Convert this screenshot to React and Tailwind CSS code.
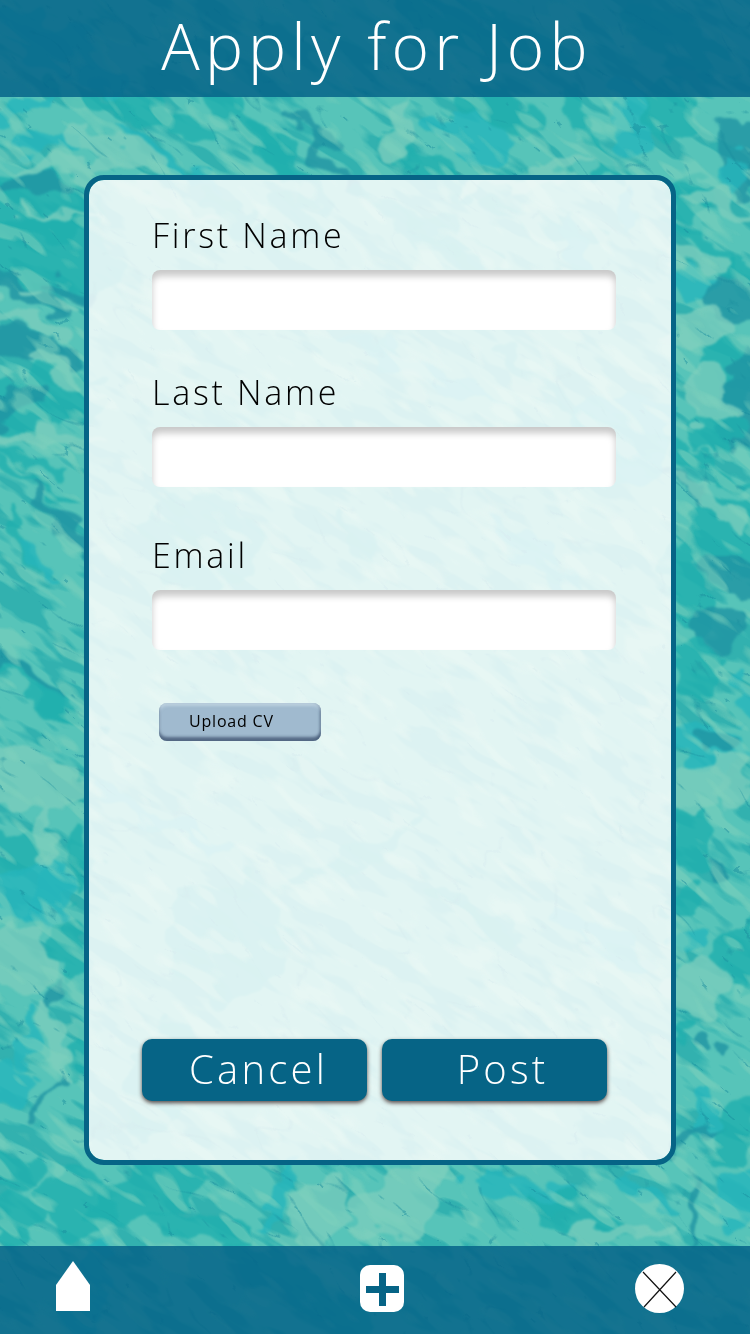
import React from "react";

const DEEP = "#1f93a3";
const TEAL = "#1fafae";
const AQUA = "#25b5bb";
const PALE = "#7acdbd";

// Ripples on the water: [cx, cy, rx, ry, angle, colour]
const ripples = [
  [20, 115, 30, 10, -30, AQUA], [45, 140, 40, 9, -5, AQUA], [90, 105, 60, 9, 20, TEAL],
  [45, 205, 60, 36, 10, TEAL], [35, 185, 30, 12, 0, DEEP], [50, 255, 70, 40, 12, TEAL],
  [20, 290, 60, 10, 25, DEEP], [70, 290, 24, 8, 20, DEEP], [30, 348, 50, 18, 15, DEEP],
  [35, 400, 70, 28, -10, TEAL], [10, 405, 40, 14, -30, DEEP], [15, 455, 60, 6, 15, TEAL],
  [30, 480, 60, 5, 30, TEAL], [60, 520, 50, 6, 45, DEEP], [20, 540, 30, 5, 60, TEAL],
  [40, 560, 34, 5, 45, AQUA], [40, 690, 75, 12, 38, TEAL], [20, 670, 50, 8, 35, DEEP],
  [65, 710, 40, 8, 35, TEAL], [15, 850, 40, 22, -20, TEAL], [25, 890, 45, 28, -25, AQUA],
  [52, 900, 20, 30, 10, AQUA], [68, 950, 16, 30, -10, TEAL], [80, 860, 12, 36, 0, TEAL],
  [57, 990, 5, 16, 5, DEEP], [30, 1040, 8, 34, 0, AQUA], [10, 1085, 18, 26, 0, AQUA],
  [76, 1060, 12, 26, 20, TEAL], [42, 1105, 30, 4, -55, DEEP], [15, 1170, 30, 20, 10, TEAL],
  [10, 1215, 26, 22, 0, TEAL], [75, 1205, 40, 34, 10, TEAL],
  [150, 110, 70, 12, 25, TEAL], [170, 160, 60, 6, 30, AQUA], [250, 130, 70, 14, 48, TEAL],
  [290, 170, 60, 16, 50, TEAL], [230, 215, 40, 12, 40, TEAL], [290, 225, 34, 22, 30, TEAL],
  [330, 155, 60, 6, 50, DEEP], [430, 170, 60, 14, 40, TEAL], [470, 140, 50, 24, 20, AQUA],
  [500, 110, 50, 20, 20, TEAL], [540, 220, 60, 12, 15, TEAL], [450, 235, 60, 8, 25, TEAL],
  [590, 140, 54, 10, 65, TEAL], [630, 120, 20, 44, -10, AQUA], [625, 210, 8, 26, -10, AQUA],
  [670, 110, 26, 34, 0, TEAL], [740, 155, 18, 44, 0, DEEP], [730, 175, 10, 26, 0, AQUA],
  [690, 195, 20, 24, 20, TEAL], [700, 240, 50, 8, 35, TEAL], [690, 285, 22, 14, 20, AQUA],
  [735, 300, 34, 24, 20, DEEP], [740, 270, 24, 16, 0, TEAL], [730, 370, 34, 34, 30, TEAL],
  [745, 400, 20, 54, 10, DEEP], [715, 430, 26, 22, 0, TEAL], [700, 460, 60, 8, 35, TEAL],
  [690, 485, 50, 7, 45, DEEP], [725, 535, 44, 36, 25, TEAL], [735, 575, 34, 20, 30, DEEP],
  [690, 590, 18, 54, -20, TEAL], [720, 630, 30, 20, 0, DEEP], [695, 670, 22, 34, 10, TEAL],
  [710, 745, 34, 24, 10, AQUA], [720, 740, 18, 12, 0, DEEP], [745, 700, 8, 28, -20, AQUA],
  [690, 840, 26, 34, 0, TEAL], [685, 900, 20, 14, -30, TEAL], [718, 865, 9, 14, 0, DEEP],
  [740, 960, 28, 30, 0, TEAL], [690, 940, 22, 8, -20, AQUA], [708, 1040, 7, 9, 0, DEEP],
  [724, 1044, 6, 10, 20, DEEP], [685, 1030, 8, 10, 0, TEAL], [705, 1110, 10, 30, 10, AQUA],
  [690, 1140, 34, 5, -35, DEEP], [735, 1130, 26, 30, 20, TEAL], [690, 1210, 5, 40, 0, DEEP],
  [740, 1200, 20, 34, 10, AQUA], [150, 1190, 60, 22, -20, TEAL], [200, 1225, 60, 16, 10, TEAL],
  [280, 1200, 9, 40, 20, AQUA], [520, 1190, 54, 14, 15, AQUA], [580, 1220, 54, 18, 20, TEAL],
  [640, 1190, 34, 10, 30, AQUA], [230, 940, 60, 60, 0, TEAL], [160, 820, 80, 10, 25, AQUA],
  [420, 370, 90, 8, 25, AQUA], [560, 400, 90, 9, 40, TEAL], [360, 540, 34, 8, 60, TEAL],
  [540, 560, 80, 10, 40, AQUA], [200, 540, 60, 50, 20, TEAL], [620, 440, 50, 50, 0, AQUA],
  [480, 920, 60, 14, 35, TEAL], [600, 940, 60, 14, 30, AQUA], [350, 860, 90, 10, -25, TEAL],
  [420, 230, 90, 10, 35, TEAL], [580, 260, 14, 44, -15, AQUA], [160, 1080, 34, 60, 20, TEAL],
  [300, 1290, 90, 20, 30, TEAL], [90, 1290, 20, 60, 20, AQUA], [480, 30, 90, 24, 20, TEAL],
  [60, 50, 80, 24, 30, AQUA], [680, 40, 70, 24, 30, TEAL],
  [70, 165, 60, 8, -5, PALE], [60, 215, 44, 3, 10, PALE], [20, 315, 60, 7, 25, PALE],
  [62, 375, 36, 9, 35, PALE], [32, 291, 14, 4, 15, PALE], [70, 307, 14, 4, 20, PALE],
  [25, 435, 80, 7, 5, PALE], [25, 780, 60, 34, 10, PALE], [22, 960, 32, 34, 0, PALE],
  [55, 1040, 12, 44, -10, PALE], [46, 840, 9, 30, -10, PALE], [700, 260, 36, 10, 10, PALE],
  [700, 330, 36, 14, -15, PALE], [705, 395, 24, 32, 0, PALE], [720, 205, 34, 10, 20, PALE],
  [710, 500, 50, 8, 40, PALE], [698, 790, 26, 30, 0, PALE], [730, 780, 22, 28, 0, PALE],
  [700, 990, 32, 26, 0, PALE], [520, 180, 70, 7, -12, PALE], [120, 150, 60, 12, 20, PALE],
  [160, 200, 60, 8, 25, PALE], [400, 130, 12, 36, 20, PALE], [400, 1200, 54, 30, -30, PALE],
  [320, 1210, 28, 40, 20, PALE], [620, 1235, 50, 9, 0, PALE],
];

function Water() {
  return (
    <svg
      className="absolute inset-0 -z-10 h-full w-full"
      viewBox="0 0 750 1334"
      preserveAspectRatio="xMidYMid slice"
      aria-hidden="true"
    >
      <defs>
        <filter id="swirl" x="-5%" y="-5%" width="110%" height="110%" colorInterpolationFilters="sRGB">
          <feTurbulence type="fractalNoise" baseFrequency="0.03 0.04" numOctaves="2" seed="8" result="n" />
          <feDisplacementMap in="SourceGraphic" in2="n" scale="44" xChannelSelector="R" yChannelSelector="G" />
          <feGaussianBlur stdDeviation="0.9" />
        </filter>
        <filter id="streaks" x="0" y="0" width="100%" height="100%" colorInterpolationFilters="sRGB">
          <feTurbulence type="fractalNoise" baseFrequency="0.014 0.05" numOctaves="3" seed="21" />
          <feColorMatrix values="0 0 0 0 0.12  0 0 0 0 0.66  0 0 0 0 0.67  9 0 0 0 -4.6" />
        </filter>
        <filter id="glints" x="0" y="0" width="100%" height="100%" colorInterpolationFilters="sRGB">
          <feTurbulence type="fractalNoise" baseFrequency="0.02 0.06" numOctaves="2" seed="5" />
          <feColorMatrix values="0 0 0 0 0.5  0 0 0 0 0.82  0 0 0 0 0.74  0 9 0 0 -5" />
        </filter>
        <filter id="threads" x="0" y="0" width="100%" height="100%" colorInterpolationFilters="sRGB">
          <feTurbulence type="turbulence" baseFrequency="0.012 0.03" numOctaves="2" seed="12" />
          <feColorMatrix values="0 0 0 0 0.1  0 0 0 0 0.55  0 0 0 0 0.62  -16 0 0 0 0.9" />
        </filter>
      </defs>
      <rect width="750" height="1334" fill="#57c4b9" />
      <g transform="rotate(32 375 667)" opacity="0.65">
        <rect x="-450" y="-200" width="1650" height="1750" filter="url(#streaks)" />
      </g>
      <g filter="url(#swirl)">
        {ripples.map(([cx, cy, rx, ry, angle, fill], i) => (
          <ellipse
            key={i}
            cx={cx}
            cy={cy}
            rx={rx}
            ry={ry}
            fill={fill}
            opacity="0.8"
            transform={`rotate(${angle} ${cx} ${cy})`}
          />
        ))}
      </g>
      <g transform="rotate(38 375 667)" opacity="0.55">
        <rect x="-450" y="-200" width="1650" height="1750" filter="url(#glints)" />
      </g>
      <g transform="rotate(40 375 667)" opacity="0.5">
        <rect x="-450" y="-200" width="1650" height="1750" filter="url(#threads)" />
      </g>
    </svg>
  );
}

function Field({ id, label, type = "text", className = "" }) {
  return (
    <div className={`flex flex-col gap-[11px] ${className}`}>
      <label htmlFor={id} className="text-[34px] leading-[48px] tracking-[0.08em] text-black">
        {label}
      </label>
      <input
        id={id}
        type={type}
        className="h-[60px] w-full rounded-lg bg-white px-4 text-2xl text-black shadow-[inset_0_6px_7px_rgba(0,0,0,0.22)] outline-none"
      />
    </div>
  );
}

function ActionButton({ children, type = "button", className = "" }) {
  return (
    <button
      type={type}
      className={`h-[62px] rounded-[10px] bg-[#066486] pb-0.5 text-[40px] leading-[60px] tracking-[0.08em] text-white shadow-[0_2px_4px_rgba(50,30,30,0.8)] ${className}`}
    >
      {children}
    </button>
  );
}

export default function App() {
  return (
    <div className="relative isolate flex min-h-screen flex-col overflow-hidden font-['Open_Sans',sans-serif] font-light">
      <Water />

      <header className="flex h-[97px] items-start justify-center bg-[#066488]/85 pl-1">
        <h1 className="text-[64px] leading-[92px] font-light tracking-[0.08em] text-white">Apply for Job</h1>
      </header>

      <main className="flex flex-1 flex-col pt-[78px] pr-[74px] pb-[81px] pl-[84px]">
        <form
          className="flex flex-1 flex-col rounded-[20px] border-[5px] border-[#066486] bg-white/83 bg-clip-padding pt-[31px] pb-[59px]"
          onSubmit={(e) => e.preventDefault()}
        >
          <div className="flex flex-col pr-[55px] pl-[63px]">
            <Field id="first-name" label="First Name" />
            <Field id="last-name" label="Last Name" className="mt-[38px]" />
            <Field id="email" label="Email" type="email" className="mt-11" />
            <button
              type="button"
              className="mt-[53px] ml-[7px] h-[38px] w-[162px] rounded-lg bg-[#a0bacf] pb-0.5 pl-[30px] text-left text-base leading-9 font-normal tracking-wider text-black shadow-[inset_0_-4px_3px_rgba(60,80,110,0.75),inset_0_3px_3px_rgba(215,232,240,0.5),inset_-2px_0_2px_rgba(80,105,135,0.4)]"
            >
              Upload CV
            </button>
          </div>
          <div className="mt-auto grid grid-cols-2 gap-[15px] pr-16 pl-[53px]">
            <ActionButton className="pl-2">Cancel</ActionButton>
            <ActionButton type="submit" className="pl-4">Post</ActionButton>
          </div>
        </form>
      </main>

      <nav className="flex h-[88px] items-center justify-between bg-[#066488]/85 pr-[66px] pb-[3px] pl-14">
        <a href="#home" aria-label="Home" className="w-[72px]">
          <svg width="34" height="50" viewBox="0 0 34 50" className="-mt-1.5 block">
            <path d="M17 0 34 24V50H0V24Z" fill="#fff" />
          </svg>
        </a>
        <button type="button" aria-label="Add">
          <svg width="44" height="47" viewBox="0 0 44 47" className="block">
            <rect width="44" height="47" rx="10" fill="#fff" />
            <path d="M19 8h7v13h13v7H26v13h-7V28H6v-7h13Z" fill="#066486" />
          </svg>
        </button>
        <button type="button" aria-label="Close">
          <svg width="49" height="49" viewBox="0 0 49 49" className="block">
            <circle cx="24.500" cy="24.500" r="24.500" fill="#fff" />
            <path d="M8 8 41 43M41 8 9 43" stroke="#111" strokeWidth="1.200" />
          </svg>
        </button>
      </nav>
    </div>
  );
}
